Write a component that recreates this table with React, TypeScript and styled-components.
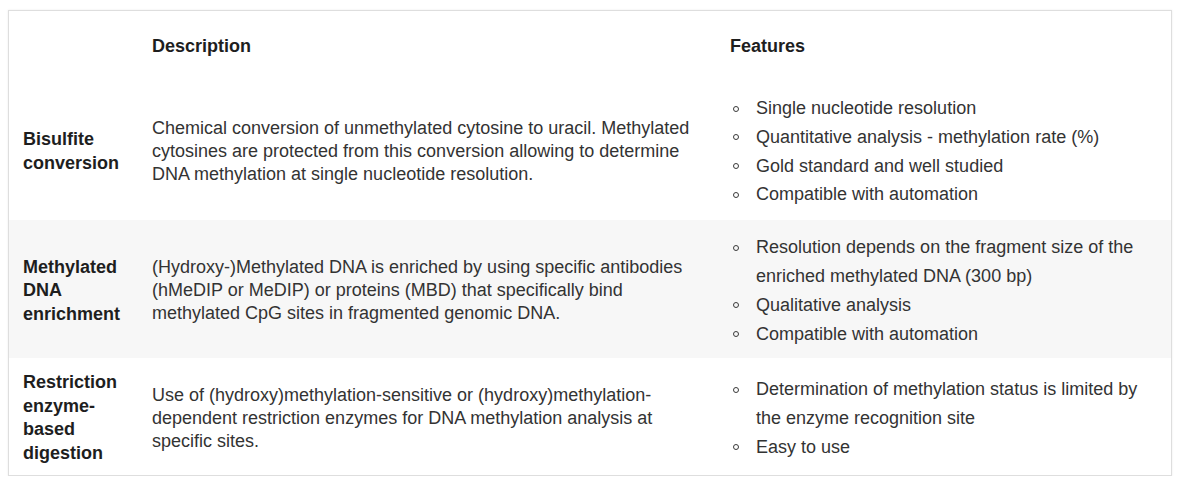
import React from "react";
import styled, { createGlobalStyle } from "styled-components";

const Global = createGlobalStyle`
  html, body { margin: 0; padding: 0; background: #ffffff; }
  body { font-family: "Liberation Sans", Arial, sans-serif; }
`;

const Page = styled.div`
  padding: 10px 9px 0 8px;
`;

const Frame = styled.div`
  border: 1px solid #dedede;
  box-shadow: 0 0 2px rgba(0, 0, 0, 0.08);
  width: 1162px;
`;

const Table = styled.table`
  width: 100%;
  border-collapse: collapse;
  table-layout: fixed;
  font-size: 18px;
  color: #333333;
`;

const Row = styled.tr<{ $shade?: boolean; $pt: number; $pb: number }>`
  background: ${(p) => (p.$shade ? "#f7f7f7" : "#ffffff")};
  & > th,
  & > td {
    padding-top: ${(p) => p.$pt}px;
    padding-bottom: ${(p) => p.$pb}px;
  }
`;

const HeadCell = styled.th`
  text-align: left;
  font-weight: bold;
  color: #1e1e1e;
  line-height: 23px;
  padding-left: 14px;
  padding-right: 14px;
  vertical-align: middle;
`;

const LabelCell = styled.th`
  text-align: left;
  font-weight: bold;
  color: #1e1e1e;
  line-height: 23.5px;
  padding-left: 14px;
  padding-right: 8px;
  vertical-align: middle;
`;

const DescCell = styled.td`
  line-height: 23px;
  padding-left: 14px;
  padding-right: 8px;
  vertical-align: middle;
`;

const FeatCell = styled.td`
  padding-left: 14px;
  padding-right: 10px;
  vertical-align: middle;
`;

const List = styled.ul`
  margin: 0;
  padding-left: 0;
  list-style: none;
`;

const Item = styled.li`
  position: relative;
  padding-left: 26px;
  line-height: 28.8px;
  &::before {
    content: "";
    position: absolute;
    left: 3px;
    top: 11.5px;
    width: 4px;
    height: 4px;
    border: 1.5px solid #3a3a3a;
    border-radius: 50%;
  }
`;

const rows = [
  {
    label: "Bisulfite conversion",
    desc: "Chemical conversion of unmethylated cytosine to uracil. Methylated cytosines are protected from this conversion allowing to determine DNA methylation at single nucleotide resolution.",
    feats: [
      "Single nucleotide resolution",
      "Quantitative analysis - methylation rate (%)",
      "Gold standard and well studied",
      "Compatible with automation",
    ],
    pt: 11,
    pb: 11,
  },
  {
    label: "Methylated DNA enrichment",
    desc: "(Hydroxy-)Methylated DNA is enriched by using specific antibodies (hMeDIP or MeDIP) or proteins (MBD) that specifically bind methylated CpG sites in fragmented genomic DNA.",
    feats: [
      "Resolution depends on the fragment size of the enriched methylated DNA (300 bp)",
      "Qualitative analysis",
      "Compatible with automation",
    ],
    shade: true,
    pt: 13,
    pb: 10,
  },
  {
    label: "Restriction enzyme-based digestion",
    desc: "Use of (hydroxy)methylation-sensitive or (hydroxy)methylation-dependent restriction enzymes for DNA methylation analysis at specific sites.",
    feats: [
      "Determination of methylation status is limited by the enzyme recognition site",
      "Easy to use",
    ],
    pt: 13,
    pb: 10,
  },
];

export default function App() {
  return (
    <>
      <Global />
      <Page>
        <Frame>
          <Table>
            <colgroup>
              <col style={{ width: 129 }} />
              <col style={{ width: 578 }} />
              <col />
            </colgroup>
            <thead>
              <Row $pt={24} $pb={25}>
                <HeadCell />
                <HeadCell>Description</HeadCell>
                <HeadCell>Features</HeadCell>
              </Row>
            </thead>
            <tbody>
              {rows.map((r) => (
                <Row key={r.label} $shade={r.shade} $pt={r.pt} $pb={r.pb}>
                  <LabelCell>{r.label}</LabelCell>
                  <DescCell>{r.desc}</DescCell>
                  <FeatCell>
                    <List>
                      {r.feats.map((f) => (
                        <Item key={f}>{f}</Item>
                      ))}
                    </List>
                  </FeatCell>
                </Row>
              ))}
            </tbody>
          </Table>
        </Frame>
      </Page>
    </>
  );
}
